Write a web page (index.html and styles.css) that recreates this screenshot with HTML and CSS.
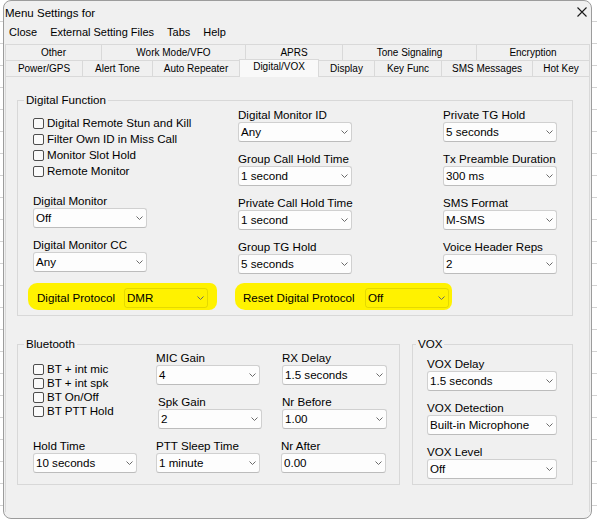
FILE: index.html
```html
<!DOCTYPE html>
<html lang="en">

<head>
    <meta charset="UTF-8">
    <meta name="viewport" content="width=device-width, initial-scale=1.0">
    <title>Menu Settings</title>
    <link rel="stylesheet" href="styles.css">
</head>

<body>
    <div class="window">
        <div class="titlebar">
            <span class="title">Menu Settings for</span>
            <svg class="close-x" viewBox="0 0 10 10" width="10" height="10">
                <path d="M0.5 0.5 L9.5 9.5 M9.5 0.5 L0.5 9.5" stroke="#1a1a1a" stroke-width="1.1" fill="none" />
            </svg>
        </div>

        <div class="menubar">
            <span>Close</span>
            <span>External Setting Files</span>
            <span>Tabs</span>
            <span>Help</span>
        </div>

        <div class="tabs">
            <div class="tab-row row-top">
                <div class="tab">Other</div>
                <div class="tab">Work Mode/VFO</div>
                <div class="tab">APRS</div>
                <div class="tab">Tone Signaling</div>
                <div class="tab">Encryption</div>
            </div>
            <div class="tab-row row-bottom">
                <div class="tab">Power/GPS</div>
                <div class="tab">Alert Tone</div>
                <div class="tab">Auto Repeater</div>
                <div class="tab active">Digital/VOX</div>
                <div class="tab">Display</div>
                <div class="tab">Key Func</div>
                <div class="tab">SMS Messages</div>
                <div class="tab">Hot Key</div>
            </div>
        </div>

        <div class="tab-page">
            <fieldset class="group digital">
                <legend>Digital Function</legend>
                <div class="group-body">
                    <div class="digital-grid">
                        <div class="col col-first">
                            <div class="checks">
                                <div class="check"><span class="box"></span>Digital Remote Stun and Kill</div>
                                <div class="check"><span class="box"></span>Filter Own ID in Miss Call</div>
                                <div class="check"><span class="box"></span>Monitor Slot Hold</div>
                                <div class="check"><span class="box"></span>Remote Monitor</div>
                            </div>
                            <div class="field">
                                <label>Digital Monitor</label>
                                <div class="combo"><span>Off</span><svg class="chev" viewBox="0 0 7 4"><path d="M0.5 0.5 L3.5 3.5 L6.5 0.5" /></svg></div>
                            </div>
                            <div class="field">
                                <label>Digital Monitor CC</label>
                                <div class="combo"><span>Any</span><svg class="chev" viewBox="0 0 7 4"><path d="M0.5 0.5 L3.5 3.5 L6.5 0.5" /></svg></div>
                            </div>
                        </div>

                        <div class="col">
                            <div class="field">
                                <label>Digital Monitor ID</label>
                                <div class="combo"><span>Any</span><svg class="chev" viewBox="0 0 7 4"><path d="M0.5 0.5 L3.5 3.5 L6.5 0.5" /></svg></div>
                            </div>
                            <div class="field">
                                <label>Group Call Hold Time</label>
                                <div class="combo"><span>1 second</span><svg class="chev" viewBox="0 0 7 4"><path d="M0.5 0.5 L3.5 3.5 L6.5 0.5" /></svg></div>
                            </div>
                            <div class="field">
                                <label>Private Call Hold Time</label>
                                <div class="combo"><span>1 second</span><svg class="chev" viewBox="0 0 7 4"><path d="M0.5 0.5 L3.5 3.5 L6.5 0.5" /></svg></div>
                            </div>
                            <div class="field">
                                <label>Group TG Hold</label>
                                <div class="combo"><span>5 seconds</span><svg class="chev" viewBox="0 0 7 4"><path d="M0.5 0.5 L3.5 3.5 L6.5 0.5" /></svg></div>
                            </div>
                        </div>

                        <div class="col">
                            <div class="field">
                                <label>Private TG Hold</label>
                                <div class="combo"><span>5 seconds</span><svg class="chev" viewBox="0 0 7 4"><path d="M0.5 0.5 L3.5 3.5 L6.5 0.5" /></svg></div>
                            </div>
                            <div class="field">
                                <label>Tx Preamble Duration</label>
                                <div class="combo"><span>300 ms</span><svg class="chev" viewBox="0 0 7 4"><path d="M0.5 0.5 L3.5 3.5 L6.5 0.5" /></svg></div>
                            </div>
                            <div class="field">
                                <label>SMS Format</label>
                                <div class="combo"><span>M-SMS</span><svg class="chev" viewBox="0 0 7 4"><path d="M0.5 0.5 L3.5 3.5 L6.5 0.5" /></svg></div>
                            </div>
                            <div class="field">
                                <label>Voice Header Reps</label>
                                <div class="combo"><span>2</span><svg class="chev" viewBox="0 0 7 4"><path d="M0.5 0.5 L3.5 3.5 L6.5 0.5" /></svg></div>
                            </div>
                        </div>
                    </div>

                    <div class="protocol-row">
                        <div class="marker marker-a">
                            <label>Digital Protocol</label>
                            <div class="combo"><span>DMR</span><svg class="chev" viewBox="0 0 7 4"><path d="M0.5 0.5 L3.5 3.5 L6.5 0.5" /></svg></div>
                        </div>
                        <div class="marker marker-b">
                            <label>Reset Digital Protocol</label>
                            <div class="combo"><span>Off</span><svg class="chev" viewBox="0 0 7 4"><path d="M0.5 0.5 L3.5 3.5 L6.5 0.5" /></svg></div>
                        </div>
                    </div>
                </div>
            </fieldset>

            <div class="lower">
                <fieldset class="group bluetooth">
                    <legend>Bluetooth</legend>
                    <div class="group-body">
                        <div class="bt-grid">
                            <div class="checks bt-checks">
                                <div class="check"><span class="box"></span>BT + int mic</div>
                                <div class="check"><span class="box"></span>BT + int spk</div>
                                <div class="check"><span class="box"></span>BT On/Off</div>
                                <div class="check"><span class="box"></span>BT PTT Hold</div>
                            </div>
                            <div class="field">
                                <label>MIC Gain</label>
                                <div class="combo"><span>4</span><svg class="chev" viewBox="0 0 7 4"><path d="M0.5 0.5 L3.5 3.5 L6.5 0.5" /></svg></div>
                            </div>
                            <div class="field">
                                <label>RX Delay</label>
                                <div class="combo wide"><span>1.5 seconds</span><svg class="chev" viewBox="0 0 7 4"><path d="M0.5 0.5 L3.5 3.5 L6.5 0.5" /></svg></div>
                            </div>
                            <div class="field nudge-right">
                                <label>Spk Gain</label>
                                <div class="combo"><span>2</span><svg class="chev" viewBox="0 0 7 4"><path d="M0.5 0.5 L3.5 3.5 L6.5 0.5" /></svg></div>
                            </div>
                            <div class="field">
                                <label>Nr Before</label>
                                <div class="combo wide"><span>1.00</span><svg class="chev" viewBox="0 0 7 4"><path d="M0.5 0.5 L3.5 3.5 L6.5 0.5" /></svg></div>
                            </div>
                            <div class="field">
                                <label>Hold Time</label>
                                <div class="combo"><span>10 seconds</span><svg class="chev" viewBox="0 0 7 4"><path d="M0.5 0.5 L3.5 3.5 L6.5 0.5" /></svg></div>
                            </div>
                            <div class="field">
                                <label>PTT Sleep Time</label>
                                <div class="combo"><span>1 minute</span><svg class="chev" viewBox="0 0 7 4"><path d="M0.5 0.5 L3.5 3.5 L6.5 0.5" /></svg></div>
                            </div>
                            <div class="field nudge-left">
                                <label>Nr After</label>
                                <div class="combo wide"><span>0.00</span><svg class="chev" viewBox="0 0 7 4"><path d="M0.5 0.5 L3.5 3.5 L6.5 0.5" /></svg></div>
                            </div>
                        </div>
                    </div>
                </fieldset>

                <fieldset class="group vox">
                    <legend>VOX</legend>
                    <div class="group-body">
                        <div class="field">
                            <label>VOX Delay</label>
                            <div class="combo"><span>1.5 seconds</span><svg class="chev" viewBox="0 0 7 4"><path d="M0.5 0.5 L3.5 3.5 L6.5 0.5" /></svg></div>
                        </div>
                        <div class="field">
                            <label>VOX Detection</label>
                            <div class="combo"><span>Built-in Microphone</span><svg class="chev" viewBox="0 0 7 4"><path d="M0.5 0.5 L3.5 3.5 L6.5 0.5" /></svg></div>
                        </div>
                        <div class="field">
                            <label>VOX Level</label>
                            <div class="combo"><span>Off</span><svg class="chev" viewBox="0 0 7 4"><path d="M0.5 0.5 L3.5 3.5 L6.5 0.5" /></svg></div>
                        </div>
                    </div>
                </fieldset>
            </div>
        </div>
    </div>
</body>

</html>
```

FILE: styles.css
```css
* {
    box-sizing: border-box;
}

body {
    margin: 0;
    background-color: #fff;
    background-image: repeating-linear-gradient(to bottom, transparent 0, transparent 21px, #d2d2d2 21px, #d2d2d2 22px);
    font-family: "Liberation Sans", Arial, sans-serif;
    font-size: 11.6px;
    color: #000;
}

.window {
    margin-left: 3px;
    width: 589px;
    height: 519px;
    border: 1px solid #9c9c9c;
    border-radius: 8px;
    background: #f0f0f0;
    display: flex;
    flex-direction: column;
    overflow: hidden;
}

.titlebar {
    height: 24px;
    display: flex;
    justify-content: space-between;
    align-items: flex-start;
    padding-left: 1px;
    line-height: 24px;
    font-size: 11.5px;
}

.close-x {
    margin: 6px 4px 0 0;
}

.menubar {
    height: 19px;
    display: flex;
    gap: 13px;
    padding-left: 5px;
    font-size: 11px;
    line-height: 14px;
}

/* tab strip */
.tabs {
    margin: 0 1px;
}

.tab-row {
    display: grid;
    height: 16px;
    border-right: 1px solid #d9d9d9;
}

.row-top {
    grid-template-columns: 96px 144px 97px 134px 113px;
}

.row-bottom {
    grid-template-columns: 77px 70px 87px 79px 56px 67px 91px 57px;
}

.tab {
    border-top: 1px solid #d9d9d9;
    border-left: 1px solid #d9d9d9;
    font-size: 10px;
    line-height: 15px;
    text-align: center;
    white-space: nowrap;
    overflow: hidden;
}

.tab.active {
    position: relative;
    z-index: 1;
    align-self: start;
    margin-top: -1px;
    height: 18px;
    line-height: 13px;
    background: #f9f9f9;
    border-right: 1px solid #d9d9d9;
    margin-right: -1px;
}

.tab-page {
    flex: 1;
    margin: 0 1px 6px;
    border: 1px solid #d9d9d9;
    border-bottom: none;
    padding-left: 11px;
}

/* group boxes */
.group {
    margin: 0;
    padding: 0;
    min-width: 0;
    border: 1px solid #d8d8d8;
}

.group legend {
    margin-left: 6px;
    padding: 0 2px;
    line-height: 14px;
}

label {
    display: block;
    line-height: 14px;
    white-space: nowrap;
}

.field {
    display: flex;
    flex-direction: column;
}

.combo {
    display: flex;
    align-items: center;
    justify-content: space-between;
    height: 20px;
    width: 114px;
    padding: 0 3px 0 2px;
    border: 1px solid #d0d0d0;
    border-bottom-color: #bcbcbc;
    border-radius: 3px;
    background: #fdfdfd;
    line-height: 18px;
    white-space: nowrap;
}

.chev {
    width: 7px;
    height: 4px;
    flex-shrink: 0;
    fill: none;
    stroke: #6a6a6a;
    stroke-width: 1;
}

.checks .check {
    display: flex;
    align-items: center;
    line-height: 16px;
    white-space: nowrap;
}

.box {
    width: 11px;
    height: 11px;
    margin-right: 3px;
    border: 1px solid #4d4d4d;
    border-radius: 2px;
    background: #fafafa;
}

/* Digital Function */
.digital {
    width: 556px;
    margin-top: 16px;
}

.digital .group-body {
    padding: 1px 0 5px 15px;
}

.digital-grid {
    display: grid;
    grid-template-columns: 205px 205px 114px;
}

.col {
    display: flex;
    flex-direction: column;
    gap: 10px;
}

.col-first .checks {
    margin-top: 7px;
    margin-bottom: 5px;
}

.protocol-row {
    display: flex;
    margin-top: 9px;
    margin-left: -5px;
}

.marker {
    display: flex;
    align-items: center;
    justify-content: space-between;
    height: 27px;
    border-radius: 9px 7px 8px 10px;
    background: #fff200;
}

.marker .combo {
    width: 84px;
    background: transparent;
    border-color: rgba(0, 0, 0, 0.1);
}

.marker-a {
    width: 189px;
    padding: 5px 9px 2px 9px;
}

.marker-b {
    width: 217px;
    margin-left: 18px;
    padding: 5px 3px 2px 8px;
}

/* Bluetooth + VOX */
.lower {
    display: flex;
    gap: 12px;
    margin-top: 21px;
}

.bluetooth {
    width: 383px;
}

.bluetooth .group-body {
    padding: 0 0 11px 15px;
}

.bt-grid {
    display: grid;
    grid-template-columns: 123px 126px 105px;
    row-gap: 10px;
}

.bt-grid .combo {
    width: 104px;
}

.bt-grid .combo.wide {
    width: 105px;
}

.bt-checks {
    grid-row: 1 / span 2;
    grid-column: 1;
    margin-top: 11px;
}

.bt-checks .check {
    line-height: 14px;
}

.nudge-right {
    margin-left: 2px;
}

.nudge-left {
    margin-left: -1px;
}

.vox {
    width: 161px;
}

.vox legend {
    margin-left: 3px;
}

.vox .group-body {
    display: flex;
    flex-direction: column;
    gap: 10px;
    padding: 6px 0 0 14px;
}

.vox .combo {
    width: 130px;
}
```
